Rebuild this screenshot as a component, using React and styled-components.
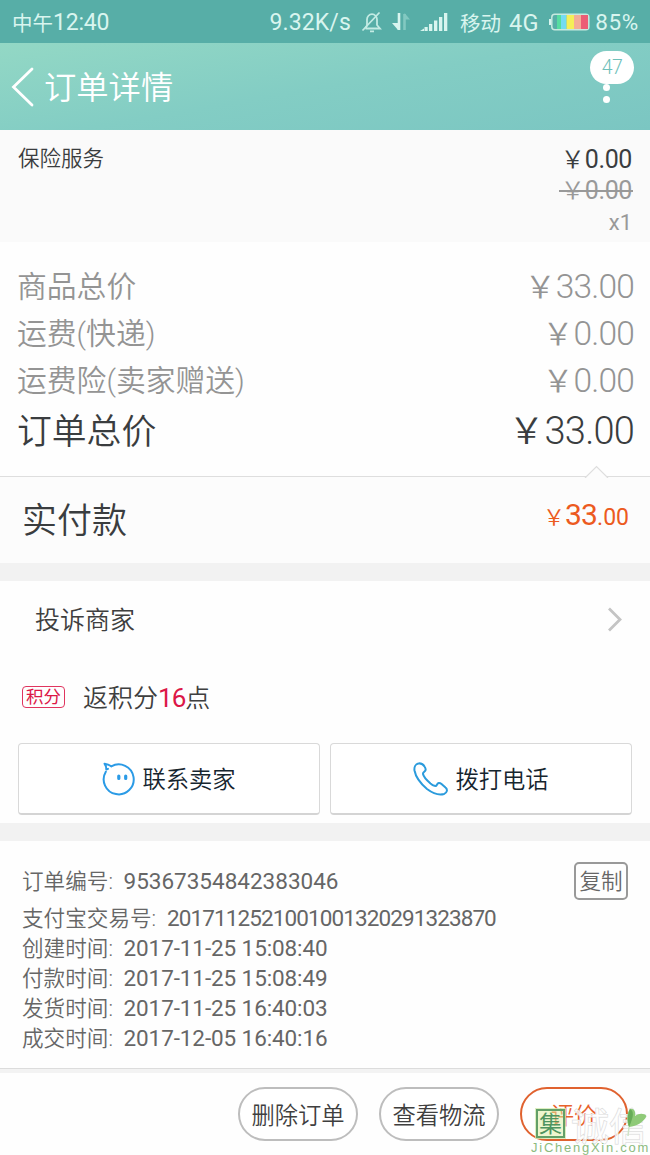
import styled, { createGlobalStyle } from 'styled-components'

const GlobalStyle = createGlobalStyle`
  * { box-sizing: border-box; }

  body {
    margin: 0;
    background: #fff;
    font-family: Roboto, 'Noto Sans CJK SC', sans-serif;
    font-weight: 350;
  }

  button { font: inherit; padding: 0; cursor: pointer; }
`

const Page = styled.div`
  position: relative;
  width: 650px;
  height: 1155px;
  overflow: hidden;
  display: flex;
  flex-direction: column;
  background: #fefefe;
`

const Label = styled.span`
  padding-top: ${({ $drop }) => $drop ?? 3}px;
  font-size: ${({ $size }) => $size}px;
  font-weight: ${({ $weight }) => $weight || 'inherit'};
  line-height: 1.3;
  color: ${({ $color }) => $color || 'inherit'};
  letter-spacing: ${({ $spacing }) => $spacing || 0}px;
  white-space: pre;
`

const StatusBar = styled.header`
  flex: none;
  height: 43px;
  display: flex;
  align-items: center;
  padding: 2px 11px 0 12px;
  background: #57aea7;
  color: #d9f5ef;
  font-weight: 400;
`

const StatusIcons = styled.div`
  display: flex;
  align-items: center;
  margin-left: auto;

  svg { display: block; }
`

const Gap = styled.span`
  flex: none;
  width: ${({ $w }) => $w}px;
`

const TitleBar = styled.div`
  flex: none;
  height: 87px;
  display: flex;
  align-items: flex-start;
  padding: 22px 16px 0 11px;
  background: linear-gradient(170deg, #93d8c5 0%, #83cdc4 50%, #7bc6c2 100%);
  color: #fff;
`

const Title = styled.h1`
  margin: 2px 0 0 10px;
  font-size: 32.3px;
  font-weight: 350;
  line-height: 42px;
`

const Messages = styled.div`
  margin: -14px 0 0 auto;
  display: flex;
  flex-direction: column;
  align-items: center;
`

const Badge = styled.span`
  width: 44px;
  height: 33px;
  border-radius: 17px;
  background: #fff;
  color: #6fc0ba;
  font-size: 19.5px;
  line-height: 33px;
  text-align: center;
  letter-spacing: -0.6px;
`

const Dot = styled.i`
  width: 7px;
  height: 7px;
  border-radius: 50%;
  background: #fff;
  margin: ${({ $top }) => $top || 0}px 11px 0 0;
`

const Insurance = styled.section`
  flex: none;
  height: 112px;
  display: flex;
  align-items: flex-start;
  justify-content: space-between;
  padding: 12px 18px 0 18px;
  background: #fafafa;
  color: #3a3d3f;
`

const InsurancePrices = styled.div`
  display: flex;
  flex-direction: column;
  align-items: flex-end;
  padding-top: 4px;
`

const Price = styled.span`
  display: block;
  position: relative;
  height: ${({ $h }) => $h}px;
  line-height: ${({ $h }) => $h}px;
  color: ${({ $color }) => $color};
  white-space: nowrap;
`

const Yen = styled.span`
  font-family: 'Noto Sans CJK SC', sans-serif;
  font-size: ${({ $size }) => $size}px;
  line-height: 1;
`

const Num = styled.span`
  font-size: ${({ $size }) => $size}px;
  font-weight: ${({ $weight }) => $weight || 'inherit'};
  letter-spacing: ${({ $spacing }) => $spacing || 0}px;
  line-height: 1;
`

const Strike = styled.i`
  position: absolute;
  left: -2px;
  right: -1px;
  top: 13px;
  height: 1.5px;
  background: #999;
`

const Totals = styled.section`
  flex: none;
  height: 234px;
  padding: 21px 16px 0 17px;
`

const TotalRow = styled.div`
  display: flex;
  align-items: center;
  justify-content: space-between;
  height: ${({ $strong }) => ($strong ? 53 : 47)}px;
  color: ${({ $strong }) => ($strong ? '#3a3d3f' : '#949494')};

  ${Price} { margin-top: ${({ $strong }) => ($strong ? -1 : 4)}px; }
`

const Paid = styled.section`
  flex: none;
  position: relative;
  height: 87px;
  display: flex;
  align-items: center;
  justify-content: space-between;
  padding: 0 21px 0 22px;
  border-top: 1px solid #dedede;
  background: #fcfcfc;
  color: #3a3d3f;
`

const Notch = styled.svg`
  position: absolute;
  right: 41px;
  top: -12px;
`

const Band = styled.div`
  flex: none;
  height: 18px;
  background: #f2f2f2;
`

const Service = styled.section`
  flex: none;
  height: 242px;
  display: flex;
  flex-direction: column;
  color: #3f3f3f;
`

const ComplaintRow = styled.div`
  height: 78px;
  display: flex;
  align-items: center;
  justify-content: space-between;
  padding: 0 27px 0 35px;
`

const PointsRow = styled.div`
  height: 76px;
  display: flex;
  align-items: center;
  gap: 18px;
  padding-left: 22px;
`

const PointsTag = styled.span`
  width: 43px;
  height: 22px;
  border: 1px solid #e0355f;
  border-radius: 4px;
  color: #dc1747;
  font-size: 17.5px;
  line-height: 20px;
  font-weight: 400;
  text-align: center;
`

const ContactRow = styled.div`
  display: grid;
  grid-template-columns: 1fr 1fr;
  gap: 10px;
  padding: 8px 18px 0;
`

const ContactButton = styled.button`
  height: 72px;
  display: flex;
  align-items: center;
  justify-content: center;
  gap: 7px;
  border: 1px solid #d9d9d9;
  border-bottom: 2px solid #d4d4d4;
  border-radius: 4px;
  background: #fff;
  color: #16252e;
`

const OrderInfo = styled.section`
  flex: none;
  height: 227px;
  padding: 20px 22px 0;
  color: #666;
`

const InfoRow = styled.div`
  display: flex;
  align-items: center;
  height: 30px;
`

const OrderNoRow = styled(InfoRow)`
  height: 40px;
  margin-bottom: 2px;
`

const InfoKey = styled.span`
  flex: none;
  padding-top: 3px;
  font-size: 21.6px;
  line-height: 1.3;
  width: ${({ $w }) => $w || 101.5}px;
  white-space: nowrap;
`

const CopyButton = styled.button`
  width: 54px;
  height: 38px;
  margin: -1px 0 0 auto;
  border: 2px solid #999;
  border-radius: 5px;
  background: transparent;
  color: #666;
  font-size: 21.6px;
  line-height: 35px;
`

const Footer = styled.footer`
  flex: none;
  height: 87px;
  display: flex;
  justify-content: flex-end;
  gap: 21px;
  padding: 14px 22px 0 0;
  border-top: 1px solid #dcdcdc;
  box-shadow: inset 0 4px 0 #f3f3f3;
`

const Pill = styled.button`
  width: ${({ $w }) => $w}px;
  height: 54px;
  margin-top: 4px;
  padding-top: 2px;
  border: 2px solid ${({ $accent }) => ($accent ? '#e0622f' : '#bdbdbd')};
  border-radius: 27px;
  background: #fff;
  color: ${({ $accent }) => ($accent ? '#e8622c' : '#3f3f3f')};
  font-size: 23.3px;
  line-height: 50px;
`

const SiteMark = styled.div`
  position: absolute;
  left: 531px;
  bottom: 0;
  width: 119px;
  height: 48px;
  font-family: 'Noto Sans CJK SC', sans-serif;
  font-weight: 400;
`

const MarkTop = styled.div`
  display: flex;
  align-items: center;
  height: 33px;
  padding-left: 5px;
`

const Seal = styled.span`
  flex: none;
  width: 29px;
  height: 29px;
  border: 2px solid #63a068;
  outline: 1px solid rgba(213, 235, 178, 0.8);
  background: rgba(220, 238, 160, 0.5);
  color: #4f9460;
  font-size: 23px;
  line-height: 23px;
  text-align: center;
`

const MarkName = styled.span`
  margin-left: 6px;
  font-size: 38px;
  line-height: 30px;
  color: rgba(255, 255, 255, 0.75);
  -webkit-text-stroke: 1px #d8d8d8;
  paint-order: stroke fill;
`

const MarkUrl = styled.div`
  margin-top: 1px;
  font-family: 'Liberation Sans', sans-serif;
  font-size: 13px;
  line-height: 14px;
  letter-spacing: 1.75px;
  color: #8cbb7e;
  white-space: nowrap;
`

const Leaf = styled.svg`
  position: absolute;
  left: 94px;
  top: 0;
`

const MuteIcon = () => (
  <svg width="22" height="24" viewBox="0 0 22 24" fill="none" stroke="#c3ebe4" strokeWidth="1.8">
    <path d="M4.500 18.500V18L6 15.500V9.500A5 5.300 0 0 1 16 9.500V15L19 18.500H4.500M9 21.300H13" />
    <path d="M1.500 20.500L18.500 2.500" />
  </svg>
)

const DataIcon = () => (
  <svg width="20" height="20" viewBox="0 0 20 20" strokeWidth="2.6" fill="none">
    <path d="M7 1V18" stroke="#d9f5ef" />
    <path d="M0 11H6V18Z" fill="#d9f5ef" />
    <path d="M12.500 18V2" stroke="#82c9c1" />
    <path d="M12.500 1L18 7.500H12.500Z" fill="#82c9c1" />
  </svg>
)

const SignalIcon = () => (
  <svg width="28" height="20" viewBox="0 0 28 20" fill="#d9f5ef">
    <path d="M0 19L4 16.500V19ZM4.500 15H7.700V19H4.500ZM9 12H12.300V19H9ZM14 8.500H17.300V19H14ZM19 5H22.300V19H19ZM24 1H27.300V19H24Z" />
  </svg>
)

const BatteryIcon = () => (
  <svg width="42" height="18" viewBox="0 0 42 18">
    <path d="M3 6H1V12H3" fill="#d9f5ef" />
    <rect x="3.8" y="1.2" width="37" height="15.6" rx="3" fill="none" stroke="#c7e9df" strokeWidth="1.5" />
    <path d="M9 2H13V16H9Z" fill="#56dda0" />
    <path d="M13 2H18.500V16H13Z" fill="#73dcf3" />
    <path d="M18.500 2H26V16H18.500Z" fill="#f5ef58" />
    <path d="M26 2H33V16H26Z" fill="#f4ad97" />
    <path d="M33 2H40V16H33Z" fill="#ec5d75" />
  </svg>
)

const BackIcon = () => (
  <svg width="23" height="42" viewBox="0 0 23 42" fill="none" stroke="#fff" strokeWidth="2.8" strokeLinecap="round">
    <path d="M21 4L2.500 22L21 40" />
  </svg>
)

const ArrowIcon = () => (
  <svg width="16" height="26" viewBox="0 0 16 26" fill="none" stroke="#c4c4c4" strokeWidth="2.8">
    <path d="M2 1.500L13 12.500L2 23.500" />
  </svg>
)

const ChatIcon = () => (
  <svg width="33" height="34" viewBox="0 0 33 34" fill="none" stroke="#2b9be6" strokeWidth="2" strokeLinejoin="round" strokeLinecap="round">
    <path d="M9.300 4.300A15 15 0 1 1 3.800 9.700" />
    <path d="M9.300 4.300C7.500 3 5 2 2.500 1.700C3.800 3.500 4.500 5 4.300 7.500L6 6.800" />
    <path d="M16.800 14V16.500M23.700 14V16.500" strokeWidth="3.2" />
  </svg>
)

const PhoneIcon = () => (
  <svg width="35" height="34" viewBox="0 0 35 34" fill="none" stroke="#2b9bdc" strokeWidth="2" strokeLinejoin="round">
    <path d="M5.500 1.500C2.500 2 1 5 1.500 8.500C2.500 14 7 21 14 27C20 31.500 26 33.500 31 32C34 31 35 27.500 32.500 25.500L28.500 22C26.500 20.300 24.700 20.700 23.800 23C23 24.700 20.500 24 17.500 21.500C13.500 18 10.500 14.500 10 12C9.700 10.500 11 10 12 9C13.500 7.500 12.500 6 11.500 4.500C10 2 8 1 5.500 1.500Z" />
  </svg>
)

const totals = [
  { label: '商品总价', value: '33.00' },
  { label: '运费(快递)', value: '0.00' },
  { label: '运费险(卖家赠送)', value: '0.00' },
  { label: '订单总价', value: '33.00', strong: true },
]

const times = [
  { label: '创建时间:', value: '2017-11-25 15:08:40' },
  { label: '付款时间:', value: '2017-11-25 15:08:49' },
  { label: '发货时间:', value: '2017-11-25 16:40:03' },
  { label: '成交时间:', value: '2017-12-05 16:40:16' },
]

const App = () => (
  <>
    <GlobalStyle />
    <Page>
      <StatusBar>
        <Label $size={20.5}>中午</Label>
        <Label $size={23} $drop={1} $spacing={-0.2}>12:40</Label>
        <StatusIcons>
          <Label $size={23} $drop={1} $spacing={0.1}>9.32K/s</Label>
          <Gap $w={10} />
          <MuteIcon />
          <Gap $w={9} />
          <DataIcon />
          <Gap $w={8} />
          <SignalIcon />
          <Gap $w={12} />
          <Label $size={20.5}>移动</Label>
          <Gap $w={8} />
          <Label $size={23.5} $drop={1} $spacing={0.5}>4G</Label>
          <Gap $w={9} />
          <BatteryIcon />
          <Gap $w={5} />
          <Label $size={22.5} $drop={1} $spacing={0.7}>85%</Label>
        </StatusIcons>
      </StatusBar>

      <TitleBar>
        <BackIcon />
        <Title>订单详情</Title>
        <Messages>
          <Badge>47</Badge>
          <Dot />
          <Dot $top={5} />
        </Messages>
      </TitleBar>

      <Insurance>
        <Label $size={21.5}>保险服务</Label>
        <InsurancePrices>
          <Price $h={31} $color="#3a3d3f">
            <Yen $size={24}>￥</Yen>
            <Num $size={25} $weight={400} $spacing={-0.4}>0.00</Num>
          </Price>
          <Price $h={31} $color="#999">
            <Yen $size={24}>￥</Yen>
            <Num $size={25} $weight={400} $spacing={-0.4}>0.00</Num>
            <Strike />
          </Price>
          <Price $h={34} $color="#999">
            <Num $size={22} $weight={400}>x1</Num>
          </Price>
        </InsurancePrices>
      </Insurance>

      <Totals>
        {totals.map(({ label, value, strong }) => (
          <TotalRow key={label} $strong={strong}>
            <Label $size={strong ? 34.8 : 29.8} $drop={strong ? 4 : 2}>{label}</Label>
            <Price $h={40}>
              <Yen $size={strong ? 36 : 31}>￥</Yen>
              <Num $size={strong ? 38 : 33.5} $spacing={-0.8}>{value}</Num>
            </Price>
          </TotalRow>
        ))}
      </Totals>

      <Paid>
        <Notch width="25" height="13" viewBox="0 0 25 13">
          <path d="M1 13L12.500 1.500L24 13" fill="#fcfcfc" stroke="#dedede" strokeWidth="1.2" />
        </Notch>
        <Label $size={35}>实付款</Label>
        <Price $h={40} $color="#ec5a20">
          <Yen $size={22}>￥</Yen>
          <Num $size={30} $weight={400} $spacing={-0.8}>33</Num>
          <Num $size={23} $weight={400}>.00</Num>
        </Price>
      </Paid>

      <Band />

      <Service>
        <ComplaintRow>
          <Label $size={25}>投诉商家</Label>
          <ArrowIcon />
        </ComplaintRow>
        <PointsRow>
          <PointsTag>积分</PointsTag>
          <Label $size={25}>
            返积分<Label $size={26} $weight={400} $color="#dc1747" $spacing={-1}>16</Label>点
          </Label>
        </PointsRow>
        <ContactRow>
          <ContactButton>
            <ChatIcon />
            <Label $size={23.3} $drop={4}>联系卖家</Label>
          </ContactButton>
          <ContactButton>
            <PhoneIcon />
            <Label $size={23.3} $drop={4}>拨打电话</Label>
          </ContactButton>
        </ContactRow>
      </Service>

      <Band />

      <OrderInfo>
        <OrderNoRow>
          <InfoKey>订单编号:</InfoKey>
          <Label $size={22.5} $weight={400} $drop={1}>95367354842383046</Label>
          <CopyButton>复制</CopyButton>
        </OrderNoRow>
        <InfoRow>
          <InfoKey $w={145}>支付宝交易号:</InfoKey>
          <Label $size={22.5} $weight={400} $drop={1} $spacing={-0.9}>2017112521001001320291323870</Label>
        </InfoRow>
        {times.map(({ label, value }) => (
          <InfoRow key={label}>
            <InfoKey>{label}</InfoKey>
            <Label $size={22.5} $weight={400} $drop={1} $spacing={-0.1}>{value}</Label>
          </InfoRow>
        ))}
      </OrderInfo>

      <Footer>
        <Pill $w={120}>删除订单</Pill>
        <Pill $w={120}>查看物流</Pill>
        <Pill $w={108} $accent>评价</Pill>
      </Footer>

      <SiteMark>
        <MarkTop>
          <Seal>集</Seal>
          <MarkName>诚信</MarkName>
        </MarkTop>
        <MarkUrl>JiChengXin.com</MarkUrl>
        <Leaf width="24" height="34" viewBox="0 0 24 34">
          <path d="M4 20C1 14 2 5 5 2C9 1 11 5 10 9C14 6 19 6 21.500 9C19 15 12 19 4 20Z" fill="#8fca78" />
          <path d="M4 20C2 12 3 5 5 2C9 4 9 9 4 20Z" fill="#67ac58" />
          <path d="M4 20L3 29" stroke="#d0e3c6" strokeWidth="1.5" />
        </Leaf>
      </SiteMark>
    </Page>
  </>
)

export default App
